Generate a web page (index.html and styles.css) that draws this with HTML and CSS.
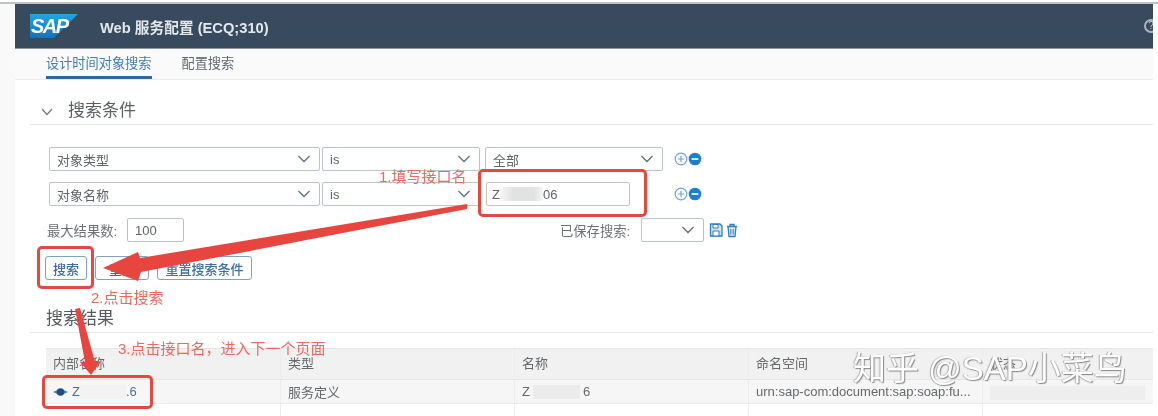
FILE: index.html
```html
<!DOCTYPE html>
<html lang="zh">
<head>
<meta charset="utf-8">
<title>Web 服务配置</title>
<link rel="stylesheet" href="styles.css">
</head>
<body>
<div class="screen">
  <div class="topline"></div>
  <div class="app">
    <header class="shell">
      <div class="logo">
        <svg class="logo-bg" width="48" height="24" viewBox="0 0 48 24"><defs><linearGradient id="sapg" x1="0" y1="0" x2="0" y2="1"><stop offset="0" stop-color="#22a5e0"/><stop offset="1" stop-color="#1272c0"/></linearGradient></defs><polygon points="0,0 48,0 24,24 0,24" fill="url(#sapg)"/></svg>
        <span class="logo-text">SAP</span>
      </div>
      <span class="shell-title">Web 服务配置 (ECQ;310)</span>
      <span class="help">?</span>
    </header>
    <nav class="tabs">
      <span class="tab tab-active">设计时间对象搜索</span>
      <span class="tab">配置搜索</span>
    </nav>
    <main class="content">
      <div class="section-head">
        <svg class="chev-section" width="12" height="8" viewBox="0 0 12 8"><path d="M1 1l5 5.500L11 1" fill="none" stroke="#777" stroke-width="1.200"/></svg>
        <h2 class="section-title">搜索条件</h2>
      </div>
      <div class="criteria">
        <div class="crit-row">
          <div class="field w-a"><span>对象类型</span><svg class="chev" width="14" height="8" viewBox="0 0 14 8"><path d="M1.500 1l5.500 5.500L12.500 1" fill="none" stroke="#5d6f80" stroke-width="1.300"/></svg></div>
          <div class="field w-b"><span>is</span><svg class="chev" width="14" height="8" viewBox="0 0 14 8"><path d="M1.500 1l5.500 5.500L12.500 1" fill="none" stroke="#5d6f80" stroke-width="1.300"/></svg></div>
          <div class="field w-c"><span>全部</span><svg class="chev" width="14" height="8" viewBox="0 0 14 8"><path d="M1.500 1l5.500 5.500L12.500 1" fill="none" stroke="#5d6f80" stroke-width="1.300"/></svg></div>
          <div class="plusminus">
            <svg width="28" height="14" viewBox="0 0 28 14"><circle cx="7" cy="7" r="5.800" fill="#fff" stroke="#6ea3d6" stroke-width="1.200"/><path d="M7 3.800v6.400M3.800 7h6.400" stroke="#6ea3d6" stroke-width="1.200"/><circle cx="21" cy="7" r="6.300" fill="#1f7fcb"/><path d="M17.600 7h6.800" stroke="#fff" stroke-width="1.600"/></svg>
          </div>
        </div>
        <div class="crit-row">
          <div class="field w-a"><span>对象名称</span><svg class="chev" width="14" height="8" viewBox="0 0 14 8"><path d="M1.500 1l5.500 5.500L12.500 1" fill="none" stroke="#5d6f80" stroke-width="1.300"/></svg></div>
          <div class="field w-b"><span>is</span><svg class="chev" width="14" height="8" viewBox="0 0 14 8"><path d="M1.500 1l5.500 5.500L12.500 1" fill="none" stroke="#5d6f80" stroke-width="1.300"/></svg></div>
          <div class="field w-d"><span class="redact-text">Z<i class="redact r-input"></i>06</span></div>
          <div class="plusminus pm-second">
            <svg width="28" height="14" viewBox="0 0 28 14"><circle cx="7" cy="7" r="5.800" fill="#fff" stroke="#6ea3d6" stroke-width="1.200"/><path d="M7 3.800v6.400M3.800 7h6.400" stroke="#6ea3d6" stroke-width="1.200"/><circle cx="21" cy="7" r="6.300" fill="#1f7fcb"/><path d="M17.600 7h6.800" stroke="#fff" stroke-width="1.600"/></svg>
          </div>
        </div>
      </div>
      <div class="limits">
        <span class="lbl">最大结果数:</span>
        <div class="field w-max"><span>100</span></div>
        <span class="lbl lbl-saved">已保存搜索:</span>
        <div class="field w-saved"><svg class="chev" width="14" height="8" viewBox="0 0 14 8"><path d="M1.500 1l5.500 5.500L12.500 1" fill="none" stroke="#5d6f80" stroke-width="1.300"/></svg></div>
        <svg class="save-icons" width="30" height="16" viewBox="0 0 30 16"><path d="M1.500 2h9.500l2 2v10h-11.500z" fill="#cfe2f3" stroke="#2f7fbf" stroke-width="1.300"/><path d="M4 2.500h5v3.500H4zM4 9h6v5H4z" fill="#fff" stroke="#2f7fbf"/><path d="M18 4.500h10M21 4.500V2.500h4v2M19 4.500l1 10h6l1-10z" fill="#d6e6f4" stroke="#2f7fbf" stroke-width="1.300"/><path d="M21.800 7v5.500M24.200 7v5.500" stroke="#2f7fbf"/></svg>
      </div>
      <div class="actions">
        <button class="btn btn-search">搜索</button>
        <button class="btn btn-hidden">重置</button>
        <button class="btn btn-reset">重置搜索条件</button>
      </div>
      <h2 class="results-title">搜索结果</h2>
      <div class="results">
        <div class="t-row t-head">
          <div class="cell">内部名称</div>
          <div class="cell">类型</div>
          <div class="cell">名称</div>
          <div class="cell">命名空间</div>
          <div class="cell">状态</div>
        </div>
        <div class="t-row t-body">
          <div class="cell cell-link"><svg width="15" height="10" viewBox="0 0 15 10"><path d="M0 5l4-1.800h7L15 5l-4 1.800H4z" fill="#3f7fb5"/><circle cx="7.500" cy="5" r="3.800" fill="#1b4f86"/></svg><span class="link-text">Z<i class="redact r-row"></i>.6</span></div>
          <div class="cell">服务定义</div>
          <div class="cell">Z<i class="redact r-name"></i>6</div>
          <div class="cell">urn:sap-com:document:sap:soap:fu...</div>
          <div class="cell"><i class="redact r-last"></i></div>
        </div>
        <div class="t-row t-empty">
          <div class="cell"></div><div class="cell"></div><div class="cell"></div><div class="cell"></div><div class="cell"></div>
        </div>
      </div>
    </main>
  </div>
  <div class="note-box nb-input"></div>
  <div class="note-box nb-search"></div>
  <div class="note-box nb-row"></div>
  <svg class="arrows" width="1158" height="416" viewBox="0 0 1158 416">
    <polygon points="467,204 467,209 141,272 138,281 103,268 138,252 140,258" fill="#e8453f"/>
    <polygon points="75,309 80,308 95,362 101,361 91,375 80,362 85,362" fill="#e8453f"/>
  </svg>
  <span class="note n1">1.填写接口名</span>
  <span class="note n2">2.点击搜索</span>
  <span class="note n3">3.点击接口名，进入下一个页面</span>
  <div class="watermark">知乎 @SAP小菜鸟</div>
</div>
</body>
</html>
```
FILE: styles.css
```css
* { box-sizing: border-box; }
html, body { margin: 0; padding: 0; background: #fff; }
body { width: 1158px; height: 416px; overflow: hidden; font-family: "Liberation Sans", "Noto Sans CJK SC", sans-serif; }
.screen { position: relative; width: 1158px; height: 416px; overflow: hidden; background: #fff; filter: blur(0.6px); }
.topline { height: 4px; background: linear-gradient(#fdfdfd 0, #fdfdfd 2px, #bfc3c4 2px, #bfc3c4 4px); }
.app { margin-left: 15px; width: 1138px; height: 412px; overflow: hidden; background: #fff; box-shadow: -15px 0 0 #f9f9f9; }

.shell { height: 45px; background: #384a5e; display: flex; align-items: center; padding-left: 15px; position: relative; overflow: hidden; border-bottom: 1px solid #8c959f; }
.logo { position: relative; width: 48px; height: 24px; flex: none; }
.logo-bg { display: block; }
.logo-text { position: absolute; left: 1px; top: 1px; font-size: 20px; line-height: 22px; font-weight: 700; font-style: italic; color: #fff; letter-spacing: -1.500px; }
.shell-title { margin-left: 22px; font-size: 14.700px; font-weight: 600; color: #e4e8ec; }
.help { margin-left: auto; margin-right: -5px; width: 14px; height: 14px; border: 2px solid #a9b4c0; border-radius: 50%; font-size: 10px; line-height: 10px; text-align: center; color: #c6ced6; flex: none; }

.tabs { height: 30px; padding-left: 31px; display: flex; gap: 30px; background: #fbfafa; box-shadow: 0 1px 0 #ececec; }
.tab { height: 30px; line-height: 30px; font-size: 13.200px; color: #5c6670; }
.tab-active { color: #437cb0; border-bottom: 3px solid #2a6aa3; }

.content { display: block; }
.section-head { margin-left: 15px; height: 46px; display: flex; align-items: flex-end; border-bottom: 1px solid #e6e6e6; padding-bottom: 1px; }
.chev-section { margin-left: 11px; margin-bottom: 7px; }
.section-title { margin: 0 0 0 15px; font-size: 17px; line-height: 24px; font-weight: 400; color: #5a5f64; }

.criteria { margin: 22px 0 0 34px; display: flex; flex-direction: column; gap: 11px; }
.crit-row { display: flex; height: 24px; align-items: center; }
.field { height: 24px; border: 1px solid #bcc3c9; border-radius: 2px; background: #fff; display: flex; align-items: center; justify-content: space-between; padding: 0 8px 0 7px; font-size: 13px; color: #5e6469; flex: none; }
.w-a { width: 271px; }
.w-b { width: 158px; margin-left: 2px; }
.w-c { width: 178px; margin-left: 5px; }
.w-d { width: 144px; margin-left: 6px; padding-left: 5px; }
.plusminus { margin-left: 11px; height: 14px; flex: none; display: flex; }
.pm-second { margin-left: 44px; }

.limits { margin: 12px 0 0 32px; display: flex; align-items: center; height: 24px; }
.lbl { font-size: 13.300px; color: #6c7176; width: 80px; flex: none; white-space: nowrap; }
.w-max { width: 57px; }
.lbl-saved { margin-left: 376px; width: 81px; }
.w-saved { width: 63px; justify-content: flex-end; }
.save-icons { margin-left: 5px; flex: none; }

.actions { margin: 14px 0 0 30px; display: flex; gap: 8px; height: 24px; }
.btn { height: 24px; padding: 0; border: 1px solid #7fa3c2; border-radius: 3px; background: #fff; color: #3d6f9f; font: 500 13px "Liberation Sans", "Noto Sans CJK SC", sans-serif; }
.btn-search { width: 42px; }
.btn-hidden { width: 54px; }
.btn-reset { width: 95px; }

.results-title { margin: 27px 0 0 15px; padding: 0 0 2px 16px; height: 26px; font-size: 17px; line-height: 24px; font-weight: 400; color: #55595d; border-bottom: 1px solid #e8e8e8; }
.results { margin: 15px 0 0 31px; }
.t-row { display: grid; grid-template-columns: 234px 234px 234px 234px 171px; }
.cell { padding-left: 7px; font-size: 13px; color: #66696c; border-left: 1px solid #ececec; display: flex; align-items: center; white-space: nowrap; }
.cell:first-child { border-left: none; }
.t-head { height: 32px; background: #f1f1f1; border-top: 1px solid #e6e6e6; border-bottom: 1px solid #e6e6e6; padding-bottom: 3px; }
.t-body { height: 24px; background: #f6f6f6; border-bottom: 1px solid #ececec; }
.t-empty { height: 30px; background: #fff; }
.cell-link svg { flex: none; }
.link-text { margin-left: 4px; color: #4b6f95; }

.redact { display: inline-block; height: 14px; background: #e6e6e6; vertical-align: middle; }
.redact-text { display: flex; align-items: center; color: #5e6469; }
.r-input { width: 43px; background: linear-gradient(90deg, #f6f6f6, #e2e2e2 30%, #e2e2e2 80%, #f6f6f6); }
.r-row { width: 46px; background: #f2f2f2; }
.r-name { width: 47px; margin: 0 3px 0 3px; background: #ebebeb; }
.r-last { width: 155px; margin-top: 2px; background: #eeeeee; }

.note-box { position: absolute; border: 3px solid #e2493f; border-radius: 5px; }
.nb-input { left: 478px; top: 169px; width: 169px; height: 48px; }
.nb-search { left: 37px; top: 246px; width: 57px; height: 43px; }
.nb-row { left: 42px; top: 375px; width: 111px; height: 34px; }
.arrows { position: absolute; left: 0; top: 0; }
.note { position: absolute; font-size: 15px; line-height: 18px; color: #ea6a60; white-space: nowrap; }
.n1 { left: 379px; top: 168px; }
.n2 { left: 91px; top: 289px; }
.n3 { left: 118px; top: 340px; }
.watermark { position: absolute; left: 853px; top: 348px; font-size: 33px; line-height: 42px; color: #fff; text-shadow: 1px 1px 1px #888, -1px 0 1px #aaa; white-space: nowrap; }
```
